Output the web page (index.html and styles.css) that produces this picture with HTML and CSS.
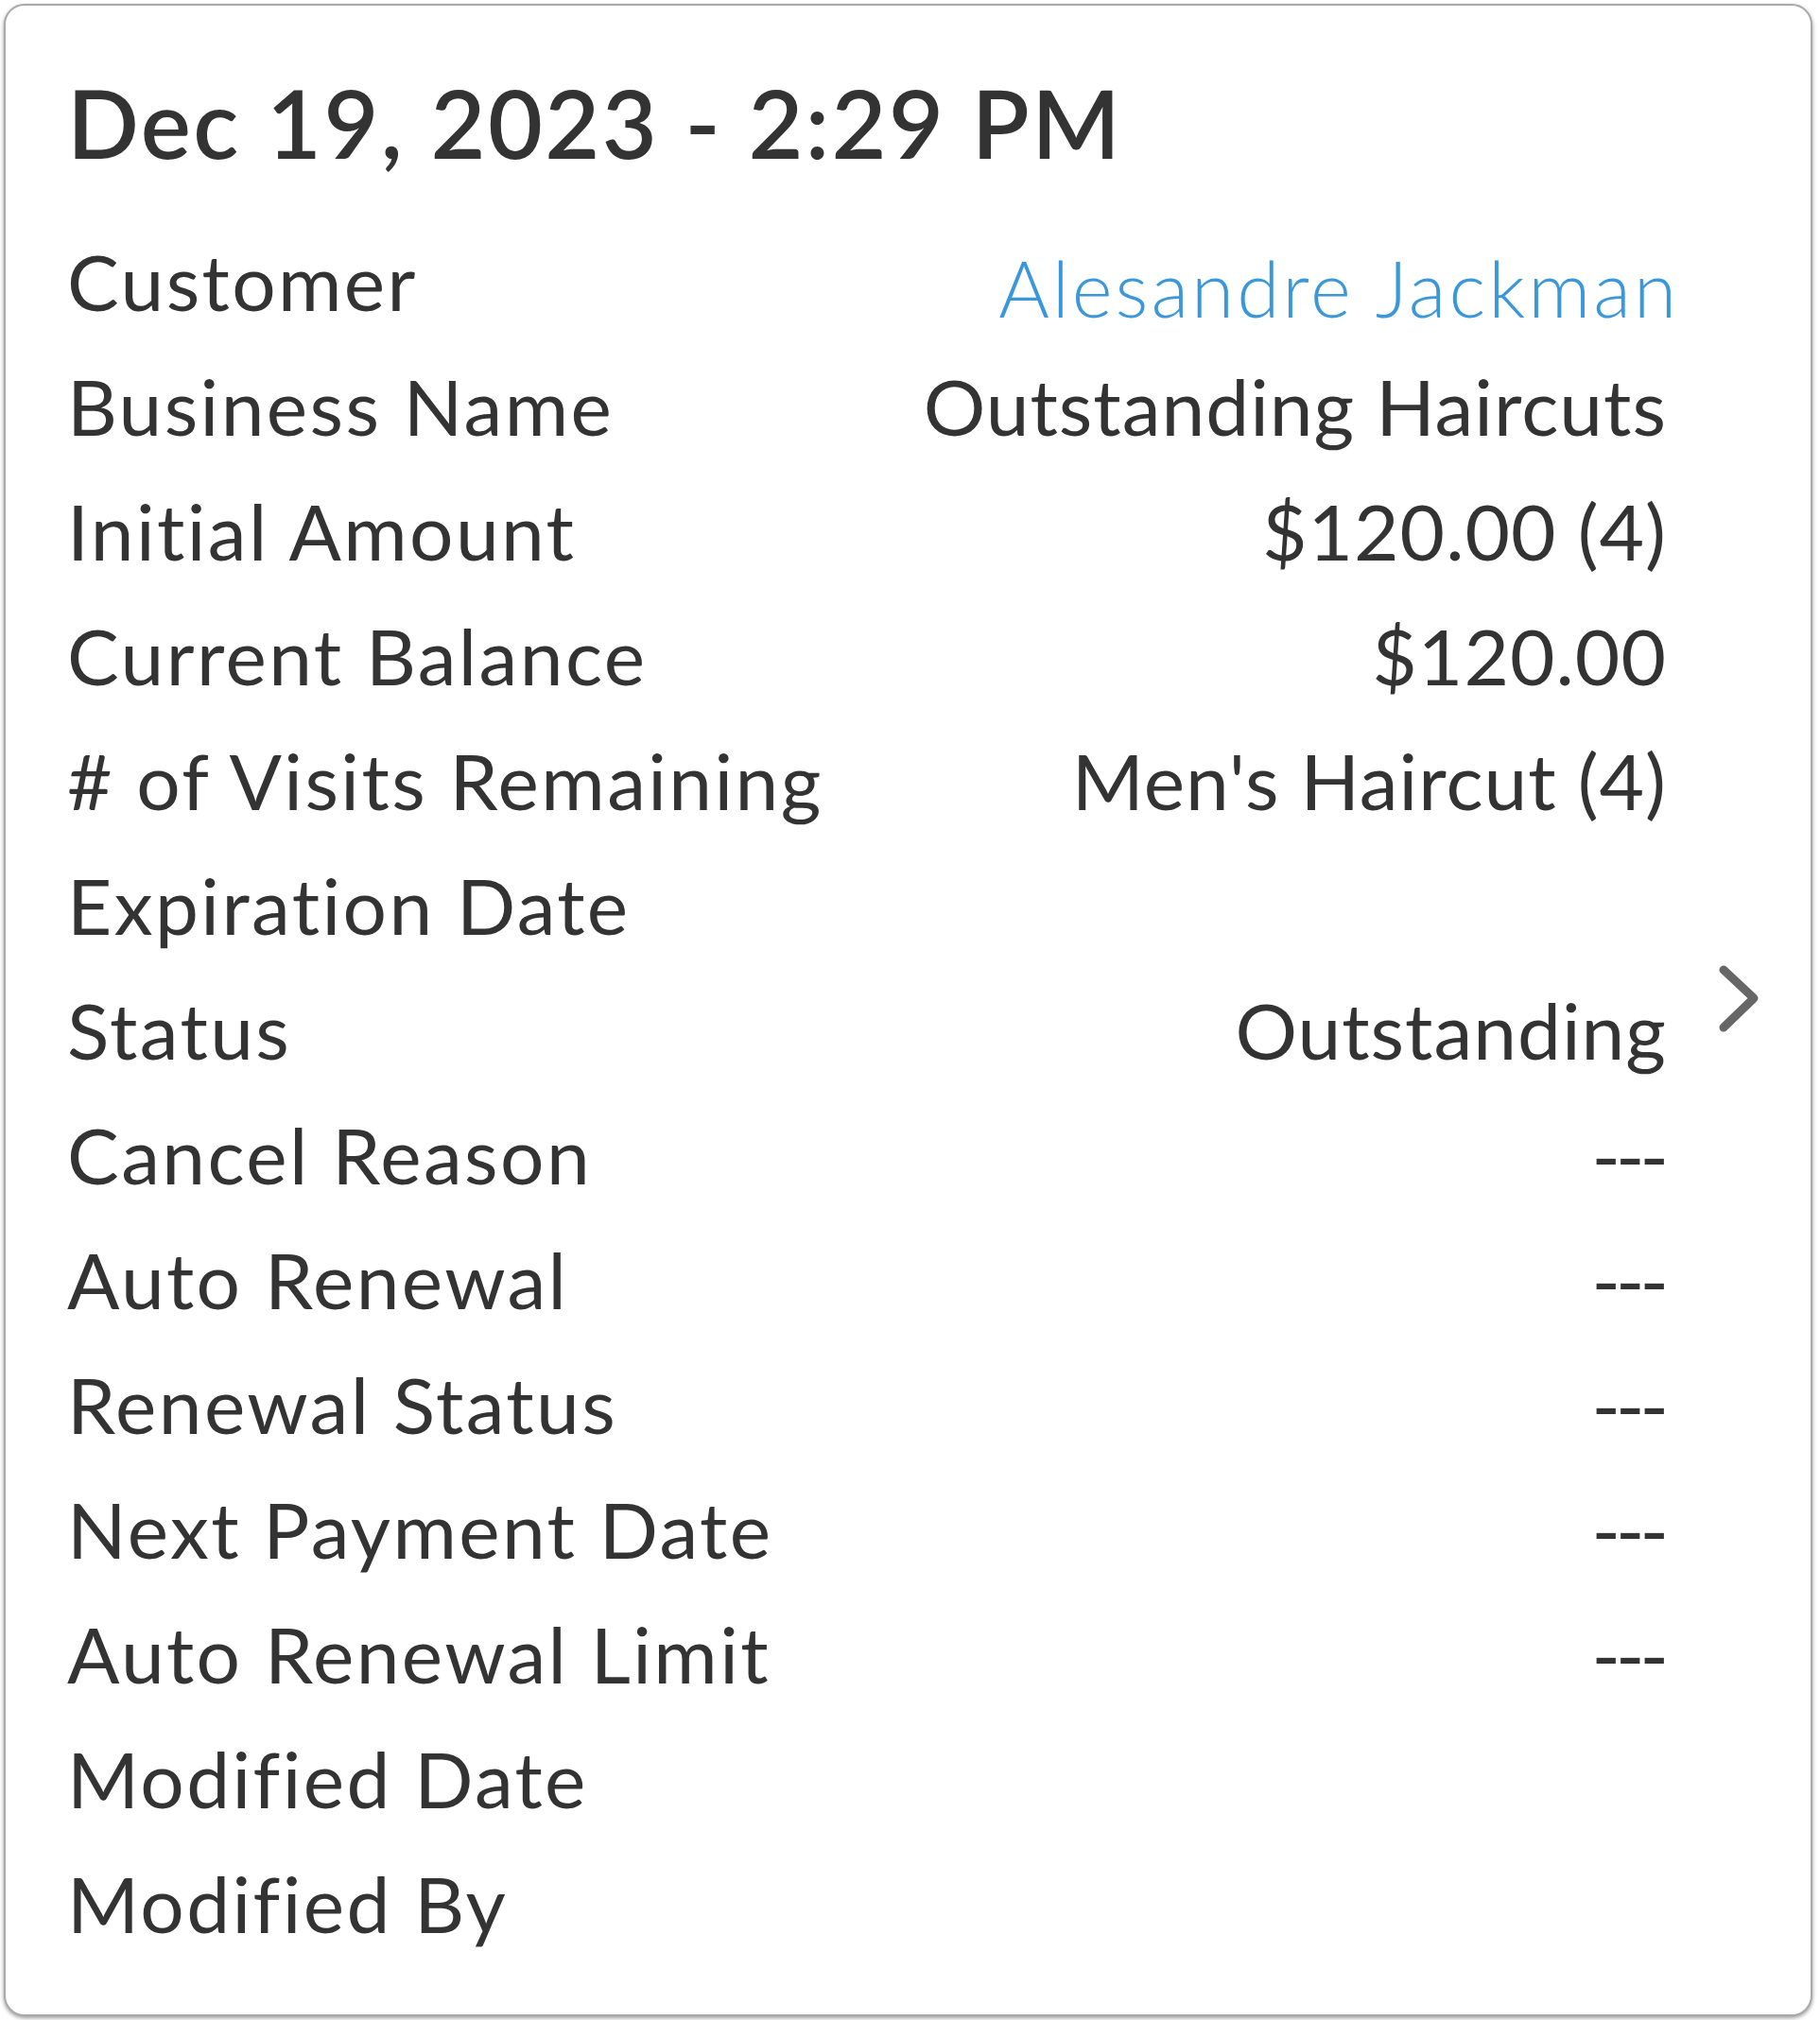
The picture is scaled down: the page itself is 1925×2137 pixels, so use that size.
FILE: index.html
```html
<!DOCTYPE html>
<html lang="en">
<head>
<meta charset="utf-8">
<title>Package Details</title>
<link rel="stylesheet" href="styles.css">
</head>
<body>
<div class="card">
  <div class="content">
    <h1 class="title">Dec 19, 2023 - 2:29 PM</h1>
    <dl class="rows">
      <div class="row"><dt>Customer</dt><dd><a class="link" href="#">Alesandre Jackman</a></dd></div>
      <div class="row"><dt>Business Name</dt><dd>Outstanding Haircuts</dd></div>
      <div class="row"><dt>Initial Amount</dt><dd>$120.00 (4)</dd></div>
      <div class="row"><dt>Current Balance</dt><dd>$120.00</dd></div>
      <div class="row"><dt># of Visits Remaining</dt><dd>Men's Haircut (4)</dd></div>
      <div class="row"><dt>Expiration Date</dt><dd></dd></div>
      <div class="row"><dt>Status</dt><dd>Outstanding</dd></div>
      <div class="row"><dt>Cancel Reason</dt><dd class="dash">---</dd></div>
      <div class="row"><dt>Auto Renewal</dt><dd class="dash">---</dd></div>
      <div class="row"><dt>Renewal Status</dt><dd class="dash">---</dd></div>
      <div class="row"><dt>Next Payment Date</dt><dd class="dash">---</dd></div>
      <div class="row"><dt>Auto Renewal Limit</dt><dd class="dash">---</dd></div>
      <div class="row"><dt>Modified Date</dt><dd></dd></div>
      <div class="row"><dt>Modified By</dt><dd></dd></div>
    </dl>
  </div>
  <div class="chev">
    <svg width="46" height="72" viewBox="0 0 46 72" aria-hidden="true">
      <path d="M7 5 L39 35 L7 66" fill="none" stroke="#666" stroke-width="9" stroke-linecap="round" stroke-linejoin="round"/>
    </svg>
  </div>
</div>
</body>
</html>
```

FILE: styles.css
```css
html, body {
  margin: 0;
  padding: 0;
  background: #ffffff;
}
body {
  padding: 4px;
  font-family: "Lato", "Liberation Sans", sans-serif;
  color: #333333;
  font-variant-ligatures: none;
}
.card {
  display: flex;
  align-items: center;
  width: 1913px;
  box-sizing: border-box;
  border: 2px solid #a9a9a9;
  border-radius: 22px;
  box-shadow: 0 2px 4px rgba(0, 0, 0, 0.4);
  background: #fff;
}
.content {
  flex: 1;
  padding: 63px 0 52px 65px;
}
.title {
  margin: 0;
  font-size: 100px;
  line-height: 120px;
  font-weight: 600;
  color: #333;
  letter-spacing: 2.4px;
}
.rows {
  margin: 42px 0 0 0;
  padding: 0;
}
.row {
  display: flex;
  justify-content: space-between;
  font-size: 82px;
  line-height: 132px;
  height: 132px;
}
.row dt, .row dd {
  margin: 0;
  white-space: nowrap;
}
.row dt {
  letter-spacing: 2.4px;
}
.row dd {
  text-align: right;
  letter-spacing: 1px;
  margin-right: -1px;
}
.row dd.dash {
  letter-spacing: -5px;
  margin-right: 2px;
}
.link {
  color: #3a97dc;
  text-decoration: none;
  font-weight: 300;
  letter-spacing: 3px;
  position: relative;
  top: 7px;
  left: 13px;
}
.chev {
  margin: 0 53px 24px 54px;
  display: flex;
}
```
